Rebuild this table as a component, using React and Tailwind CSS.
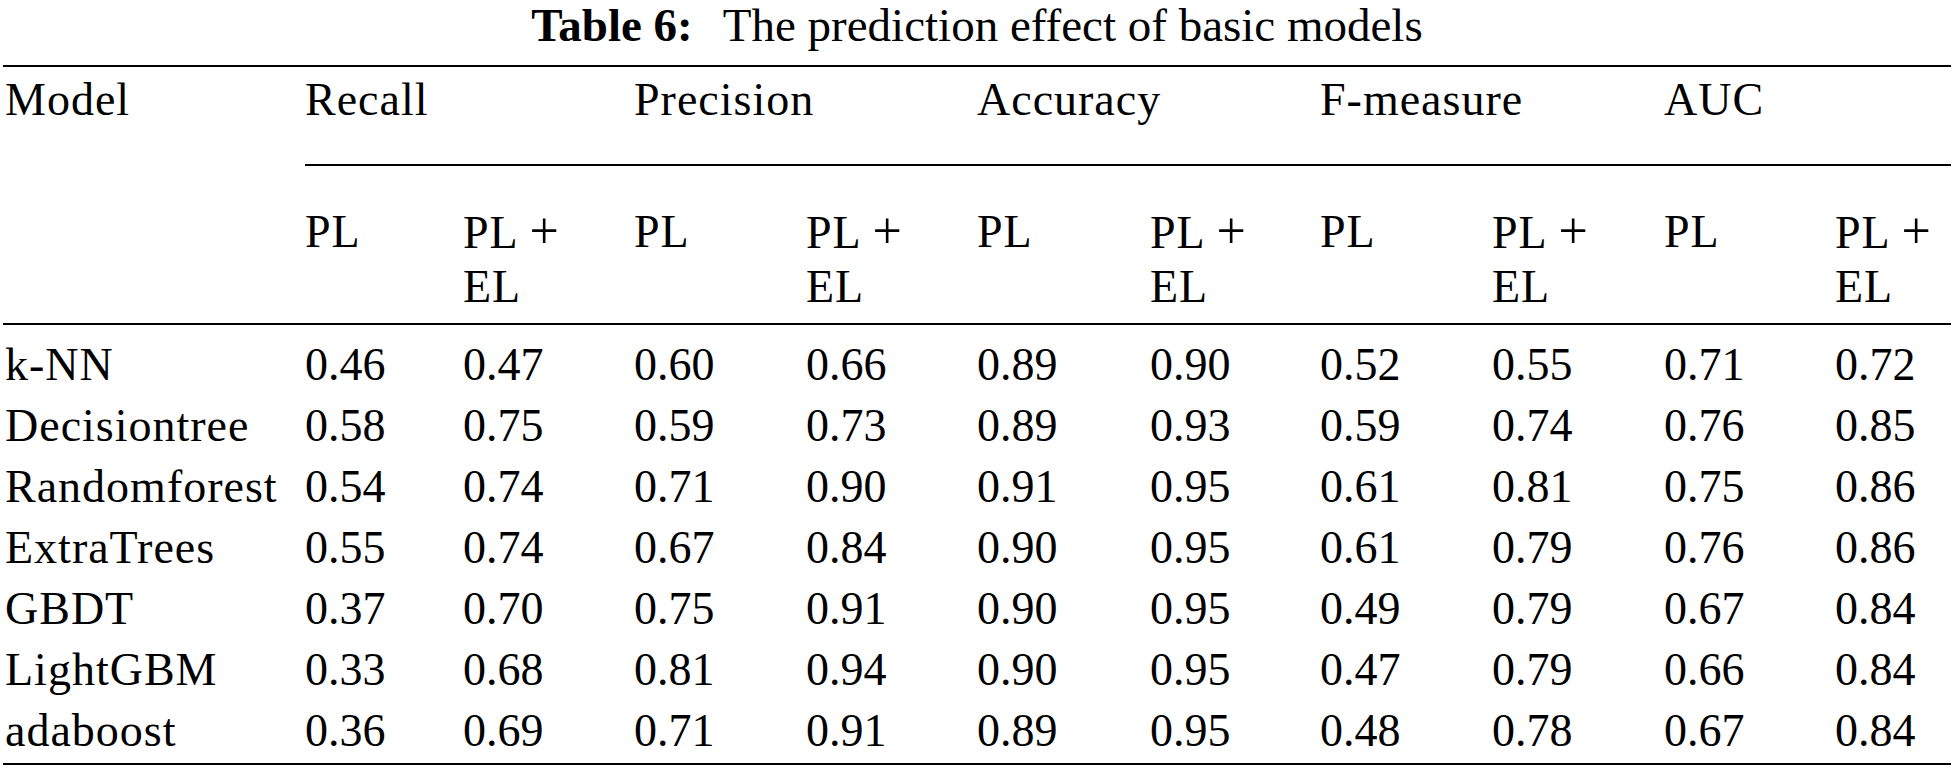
const GRID =
  'grid grid-cols-[302px_158px_171px_172px_171px_173px_170px_172px_172px_171px_116px]'

const groups = ['Recall', 'Precision', 'Accuracy', 'F-measure', 'AUC']

const rows = [
  ['k-NN', '0.46', '0.47', '0.60', '0.66', '0.89', '0.90', '0.52', '0.55', '0.71', '0.72'],
  ['Decisiontree', '0.58', '0.75', '0.59', '0.73', '0.89', '0.93', '0.59', '0.74', '0.76', '0.85'],
  ['Randomforest', '0.54', '0.74', '0.71', '0.90', '0.91', '0.95', '0.61', '0.81', '0.75', '0.86'],
  ['ExtraTrees', '0.55', '0.74', '0.67', '0.84', '0.90', '0.95', '0.61', '0.79', '0.76', '0.86'],
  ['GBDT', '0.37', '0.70', '0.75', '0.91', '0.90', '0.95', '0.49', '0.79', '0.67', '0.84'],
  ['LightGBM', '0.33', '0.68', '0.81', '0.94', '0.90', '0.95', '0.47', '0.79', '0.66', '0.84'],
  ['adaboost', '0.36', '0.69', '0.71', '0.91', '0.89', '0.95', '0.48', '0.78', '0.67', '0.84'],
]

export default function App() {
  return (
    <div className="min-h-screen w-full bg-white text-black [font-family:'Liberation_Serif','Times_New_Roman',serif] text-[46px]">
      {/* caption */}
      <div className="ml-[3px] w-[1948px] h-[51px] leading-[51px] text-center text-[47px] whitespace-nowrap">
        <span className="font-bold">Table 6:</span>
        <span className="ml-[30px]">The prediction effect of basic models</span>
      </div>

      <div className="ml-[3px] w-[1948px] mt-[14px]">
        {/* header */}
        <div className={`${GRID} border-t-2 border-black tracking-[1px]`}>
          <div className="row-span-2 pl-[2px] pt-[6px] leading-[54px] border-b-2 border-black">
            Model
          </div>
          {groups.map((g) => (
            <div key={g} className="col-span-2 h-[99px] pt-[6px] leading-[54px] border-b-2 border-black whitespace-nowrap">
              {g}
            </div>
          ))}
          {groups.map((g) => (
            <div key={g} className="contents">
              <div className="h-[159px] pt-[39px] leading-[54px] border-b-2 border-black">PL</div>
              <div className="h-[159px] pt-[39px] leading-[54px] border-b-2 border-black whitespace-nowrap">
                PL <span className="text-[52px] leading-none">+</span>
                <br />
                EL
              </div>
            </div>
          ))}
        </div>

        {/* body */}
        <div className="pt-[9px] pb-[2px] border-b-2 border-black">
          {rows.map((r) => (
            <div key={r[0]} className={`${GRID} h-[61px] leading-[61px]`}>
              {r.map((cell, i) => (
                <div key={i} className={i === 0 ? 'pl-[2px] tracking-[1px] whitespace-nowrap' : 'whitespace-nowrap'}>
                  {cell}
                </div>
              ))}
            </div>
          ))}
        </div>
      </div>
    </div>
  )
}
